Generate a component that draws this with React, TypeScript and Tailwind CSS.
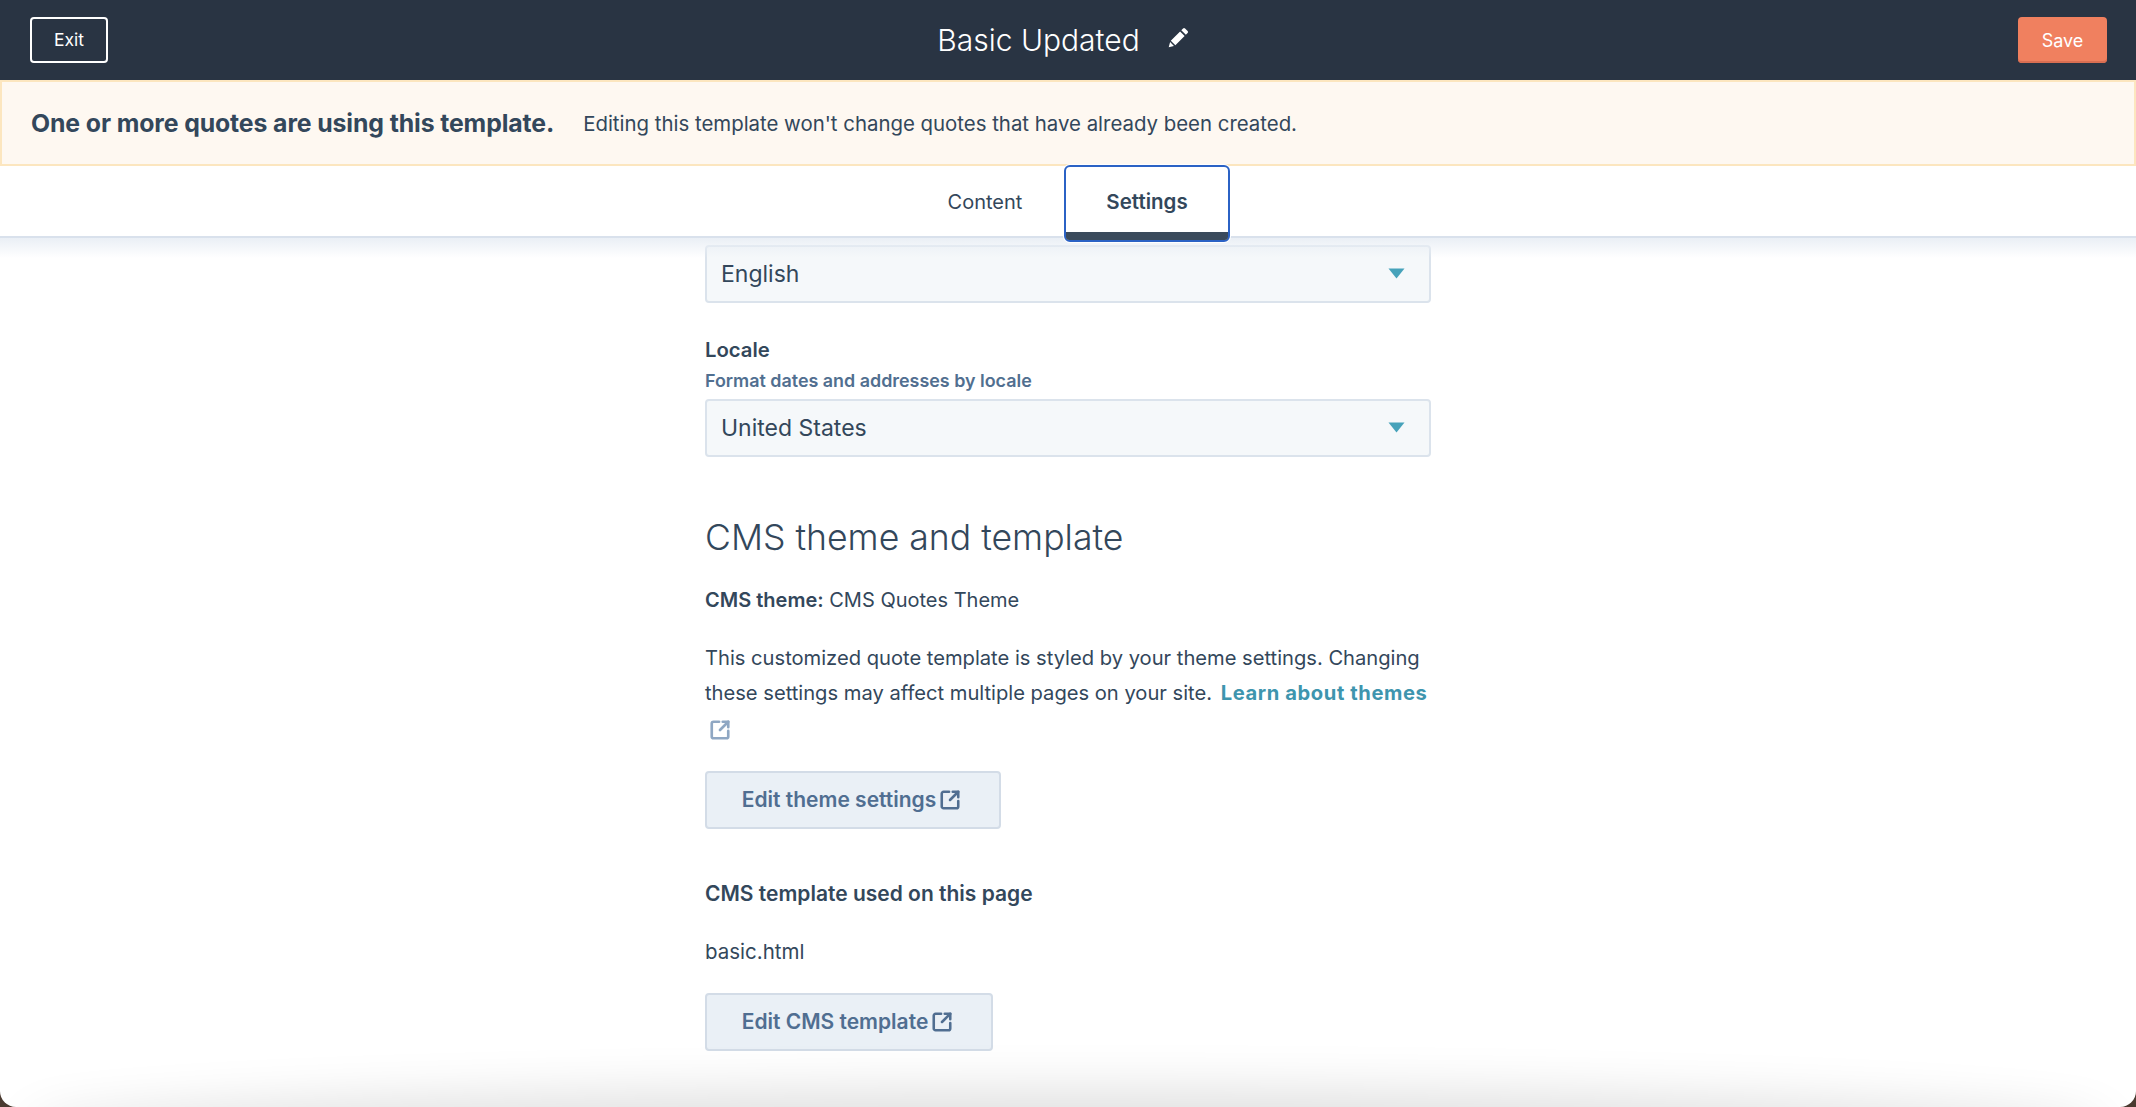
import { SquareArrowOutUpRight } from "lucide-react";

function SelectBox({ value }: { value: string }) {
  return (
    <div className="flex h-[58px] items-center justify-between rounded-[4px] border-2 border-[#dbe3ec] bg-[#f5f8fa] pl-[14px] pr-[24px] pt-[1px] text-[23px] text-[#33475b]">
      <span>{value}</span>
      <svg width="17" height="11" viewBox="0 0 17 11" className="-mt-[2px]">
        <path d="M0.5 0.5h16L8.5 10.5z" fill="#46a2ba" />
      </svg>
    </div>
  );
}

function EditButton({ label, width }: { label: string; width: string }) {
  return (
    <button
      type="button"
      className={`flex h-[58px] items-center justify-center gap-[3px] rounded-[4px] border-2 border-[#d3dce7] bg-[#eaf0f6] pr-[3px] text-[21px] font-semibold text-[#506e91] ${width}`}
    >
      {label}
      <SquareArrowOutUpRight size={22} strokeWidth={2.8} />
    </button>
  );
}

export default function App() {
  return (
    <div className="h-[1107px] w-full overflow-hidden bg-[#4a3a30] font-['Inter',sans-serif]">
      <div className="relative flex h-full flex-col overflow-hidden rounded-b-[16px] bg-white text-[#33475b]">
        <header className="flex h-[80px] shrink-0 items-center justify-between bg-[#293443] pl-[30px] pr-[29px]">
          <button
            type="button"
            className="h-[46px] w-[78px] rounded-[4px] border-2 border-white text-[17.5px] text-white"
          >
            Exit
          </button>
          <div className="flex items-center gap-[28px]">
            <h1 className="text-[30px] font-light leading-none text-white">Basic Updated</h1>
            <svg width="21" height="21" viewBox="0 0 24 24" className="-mt-[5px]" fill="white">
              <path d="M17.2 1.6a1.6 1.6 0 0 1 2.3 0l2.9 2.9a1.6 1.6 0 0 1 0 2.3l-2 2-5.2-5.2zM13.8 5l5.2 5.2L8.4 20.8l-5.2-5.2zM2.4 17.2l4.4 4.4L0.8 23.2z" />
            </svg>
          </div>
          <button
            type="button"
            className="h-[46px] w-[89px] rounded-[4px] bg-[#f0805f] text-[18px] text-white shadow-[inset_0_-2px_0_#d96e52]"
          >
            Save
          </button>
        </header>

        <div className="flex h-[86px] shrink-0 items-center gap-[29px] border-2 border-[#fce6bf] bg-[#fef8f1] pl-[29px] pt-[2px]">
          <strong className="text-[24.8px] font-bold tracking-[-0.1px]">
            One or more quotes are using this template.
          </strong>
          <span className="text-[20.4px]">
            Editing this template won't change quotes that have already been created.
          </span>
        </div>

        <nav className="flex h-[72px] shrink-0 justify-center border-b-2 border-[#d9e1ec] bg-white">
          <div className="flex h-[72px] w-[158px] items-center justify-center text-[20px]">Content</div>
          <div className="relative z-10 -mt-[1px] box-content flex h-[73px] w-[162px] flex-col rounded-[6px] border-2 border-[#2b62c5] bg-white shadow-[0_0_0_1px_#ffffff]">
            <div className="flex flex-1 items-center justify-center pt-[6px] text-[20.5px] font-semibold">Settings</div>
            <div className="h-[8px] rounded-b-[3px] bg-[#3a4a5c]" />
          </div>
        </nav>

        <main className="relative flex-1">
          <div className="pointer-events-none absolute inset-x-0 top-0 h-[20px] bg-gradient-to-b from-[#eaeff5] to-transparent" />
          <div className="mx-auto w-[726px] pt-[7px]">
            <SelectBox value="English" />
            <div className="mt-[33px] text-[20.3px] font-semibold leading-[28px]">Locale</div>
            <div className="mt-[5px] text-[17.9px] font-semibold leading-[24px] text-[#516f90]">
              Format dates and addresses by locale
            </div>
            <div className="mt-[6px]">
              <SelectBox value="United States" />
            </div>

            <h2 className="mt-[57px] text-[35.6px] font-light leading-[48px]">CMS theme and template</h2>
            <p className="mt-[23px] text-[20px] leading-[30px]">
              <strong className="font-semibold">CMS theme:</strong> CMS Quotes Theme
            </p>
            <p className="mt-[25px] text-[20.15px] leading-[35px]">
              This customized quote template is styled by your theme settings. Changing these settings may affect multiple pages on your site.{" "}
              <a className="ml-[3px] font-bold tracking-[0.6px] text-[#3e95ae]">Learn about themes</a>{" "}
              <SquareArrowOutUpRight size={22} strokeWidth={2.9} className="ml-[4px] inline text-[#8fa7c3]" />
            </p>

            <div className="mt-[26px]">
              <EditButton label="Edit theme settings" width="w-[296px]" />
            </div>
            <div className="mt-[50px] text-[21px] font-semibold leading-[30px]">CMS template used on this page</div>
            <div className="mt-[28px] text-[20.5px] leading-[30px]">basic.html</div>
            <div className="mt-[26px]">
              <EditButton label="Edit CMS template" width="w-[288px]" />
            </div>
          </div>
          <div className="pointer-events-none absolute inset-x-[40px] bottom-[-46px] h-[46px] rounded-[50%] shadow-[0_0_50px_18px_rgba(0,0,0,0.12)]" />
        </main>
      </div>
    </div>
  );
}
